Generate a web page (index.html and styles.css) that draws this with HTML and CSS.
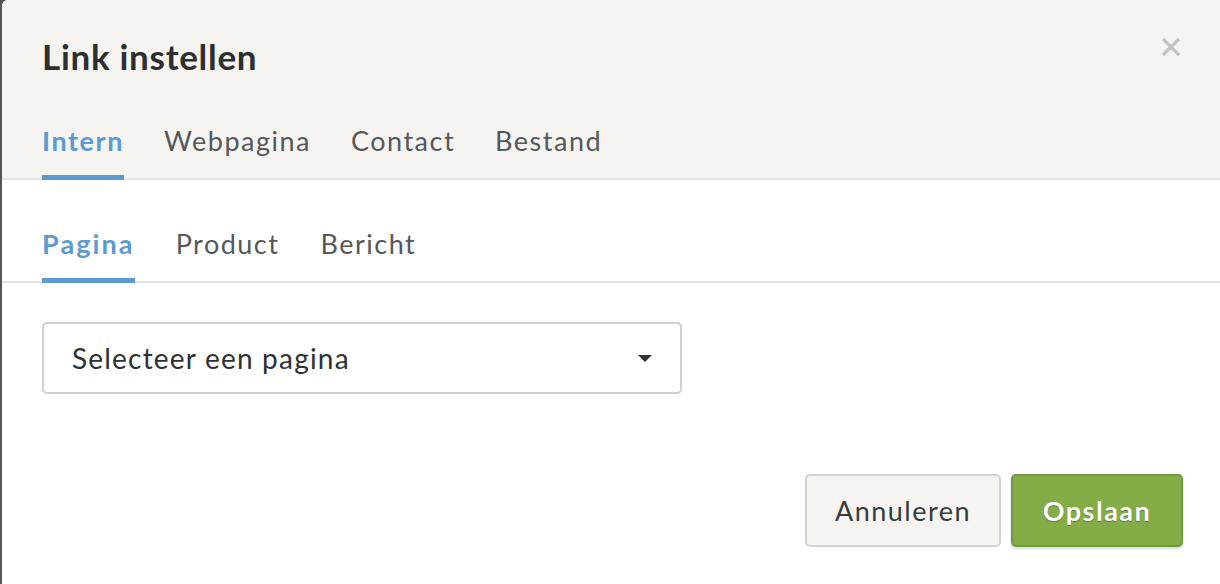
FILE: index.html
```html
<!DOCTYPE html>
<html lang="nl">
<head>
<meta charset="utf-8">
<title>Link instellen</title>
<link rel="stylesheet" href="styles.css">
</head>
<body>
<div class="modal">
  <header class="modal-header">
    <div class="title-row">
      <h1 class="title">Link instellen</h1>
      <button class="close" aria-label="Sluiten">
        <svg width="18" height="18" viewBox="0 0 18 18"><path d="M1 1 L17 17 M17 1 L1 17" stroke="#c2c2c0" stroke-width="3.2" stroke-linecap="butt"/></svg>
      </button>
    </div>
    <nav class="tabs">
      <a class="tab active">Intern</a>
      <a class="tab">Webpagina</a>
      <a class="tab">Contact</a>
      <a class="tab">Bestand</a>
    </nav>
  </header>
  <nav class="tabs subtabs">
    <a class="tab active">Pagina</a>
    <a class="tab">Product</a>
    <a class="tab">Bericht</a>
  </nav>
  <div class="modal-body">
    <div class="select">
      <span class="select-text">Selecteer een pagina</span>
      <span class="caret"></span>
    </div>
  </div>
  <footer class="modal-footer">
    <button class="btn btn-cancel">Annuleren</button>
    <button class="btn btn-save">Opslaan</button>
  </footer>
</div>
</body>
</html>
```

FILE: styles.css
```css
* { box-sizing: border-box; }
html, body { margin: 0; padding: 0; }
body {
  background: #555555;
  width: 1220px;
  height: 584px;
  overflow: hidden;
  font-family: Lato, "Open Sans", sans-serif;
  padding-left: 2px;
}
.modal {
  background: #ffffff;
  width: 1240px;
  height: 600px;
  border-radius: 6px 6px 0 0;
  overflow: hidden;
}
.modal-header {
  background: #f5f4f0;
  padding: 0 40px;
}
.title-row {
  display: flex;
  justify-content: space-between;
  align-items: flex-start;
  height: 105px;
  padding-top: 35px;
}
.title {
  margin: 0;
  font-size: 35px;
  line-height: 42px;
  font-weight: 700;
  letter-spacing: 0.7px;
  color: #2b2f31;
}
.close {
  border: 0;
  background: none;
  padding: 0;
  margin: 3px 22px 0 0;
  width: 18px;
  height: 18px;
  display: block;
}
.close svg { display: block; }
.tabs {
  display: flex;
  gap: 40px;
  border-bottom: 2px solid #e1e4e8;
  margin: 0 -40px;
  padding: 0 40px;
}
.tab {
  font-size: 27px;
  line-height: 34px;
  color: #54585b;
  letter-spacing: 1.5px;
  padding: 19px 0 17px;
  border-bottom: 5px solid transparent;
  margin-bottom: -2px;
}
.tab.active {
  color: #5b9bd1;
  font-weight: 700;
  letter-spacing: 1.6px;
  border-bottom-color: #5b9bd1;
}
.subtabs {
  margin: 0;
  padding: 28px 40px 0;
  gap: 41px;
}
.subtabs .tab.active { letter-spacing: 2.1px; }
.modal-body {
  padding: 39px 40px 0;
}
.select {
  width: 640px;
  height: 72px;
  border: 2px solid #cfcfcf;
  border-radius: 5px;
  display: flex;
  align-items: center;
  justify-content: space-between;
  padding: 0 28px 0 28px;
}
.select-text {
  font-size: 28px;
  letter-spacing: 1.2px;
  color: #2e3133;
}
.caret {
  width: 0;
  height: 0;
  border-left: 7px solid transparent;
  border-right: 7px solid transparent;
  border-top: 7px solid #333;
}
.modal-footer {
  display: flex;
  gap: 10px;
  padding: 80px 0 0 803px;
}
.btn {
  height: 73px;
  border-radius: 5px;
  font-family: Lato, "Open Sans", sans-serif;
  font-size: 27px;
  letter-spacing: 1.5px;
  padding: 0;
}
.btn-cancel {
  width: 196px;
  background: #f5f4f0;
  border: 2px solid #d2d2d0;
  color: #373b3e;
}
.btn-save {
  width: 172px;
  background: #84ad47;
  border: 2px solid #73993d;
  color: #ffffff;
  font-weight: 700;
  text-shadow: 0 1px 1px rgba(0,0,0,0.3);
  box-shadow: 0 2px 3px rgba(0,0,0,0.15);
}
```
